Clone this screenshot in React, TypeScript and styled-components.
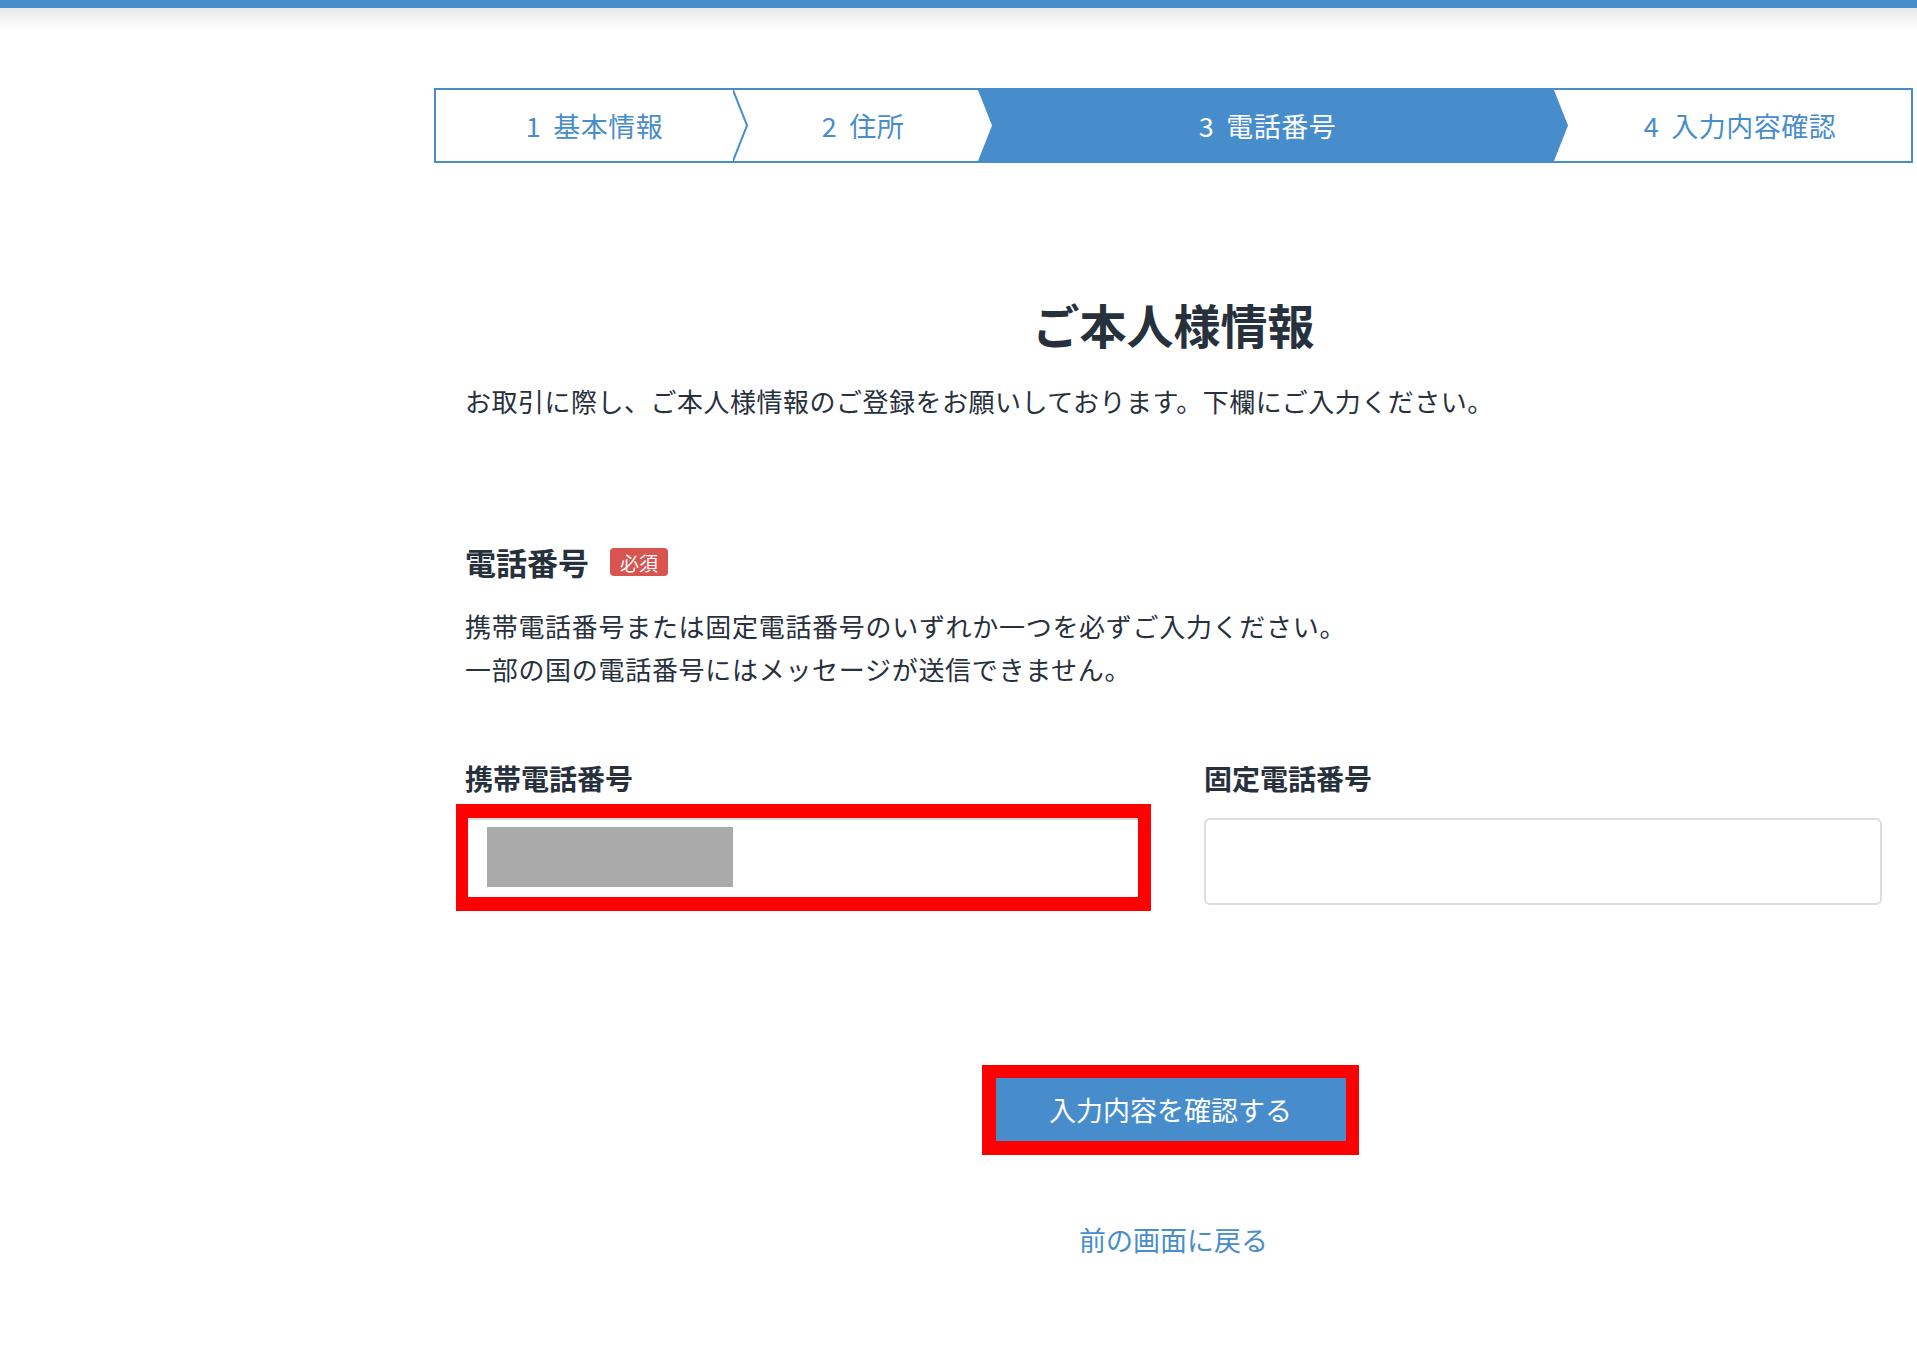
import React from "react";
import styled, { createGlobalStyle } from "styled-components";

const BLUE = "#478dcb";
const INK = "#27303d";

const GlobalStyle = createGlobalStyle`
  body {
    margin: 0;
    background: #ffffff;
    font-family: "Noto Sans CJK JP", "Noto Sans", sans-serif;
    color: ${INK};
  }
`;

const TopBar = styled.header`
  height: 22px;
  border-top: 8px solid ${BLUE};
  background: linear-gradient(#e8e8e8, #ffffff);
`;

const Main = styled.main`
  width: 1479px;
  margin: 58px 0 0 434px;
  padding-bottom: 100px;
`;

const StepBar = styled.ol`
  display: flex;
  height: 71px;
  margin: 0;
  padding: 0;
  list-style: none;
  border: 2px solid ${BLUE};
`;

const Step = styled.li<{ $active?: boolean; $width?: number; $shift?: number }>`
  display: flex;
  align-items: center;
  justify-content: center;
  flex: ${(p) => (p.$width ? `0 0 ${p.$width}px` : "1 1 auto")};
  padding-left: ${(p) => (p.$shift && p.$shift > 0 ? p.$shift : 0)}px;
  padding-right: ${(p) => (p.$shift && p.$shift < 0 ? -p.$shift : 0)}px;
  box-sizing: border-box;
  background: ${(p) => (p.$active ? BLUE : "#ffffff")};
  color: ${(p) => (p.$active ? "#ffffff" : BLUE)};
  font-size: 27px;
  letter-spacing: 0.5px;
`;

const StepNo = styled.span`
  margin-right: 12px;
`;

const Divider = styled.svg`
  display: block;
  flex: 0 0 15px;
  width: 15px;
  height: 71px;
`;

type Join = "line" | "into-active" | "out-of-active";

function Chevron({ kind }: { kind: Join }) {
  if (kind === "line") {
    return (
      <Divider viewBox="0 0 15 71" preserveAspectRatio="none">
        <rect width="15" height="71" fill="#fff" />
        <polyline points="0,0 14,35.5 0,71" fill="none" stroke={BLUE} strokeWidth="2" />
      </Divider>
    );
  }
  const back = kind === "into-active" ? BLUE : "#fff";
  const front = kind === "into-active" ? "#fff" : BLUE;
  return (
    <Divider viewBox="0 0 15 71" preserveAspectRatio="none">
      <rect width="15" height="71" fill={back} />
      <polygon points="0,0 14,35.5 0,71" fill={front} />
    </Divider>
  );
}

const Content = styled.section`
  margin: 0 31px;
  display: flex;
  flex-direction: column;
`;

const Title = styled.h1`
  margin: 128px 0 0;
  text-align: center;
  font-size: 47px;
  line-height: 66px;
  font-weight: 700;
  color: ${INK};
`;

const Lead = styled.p`
  margin: 22px 0 0;
  font-size: 26px;
  line-height: 44px;
  letter-spacing: 0.5px;
`;

const SectionHead = styled.div`
  display: flex;
  align-items: center;
  gap: 21px;
  margin-top: 117px;
`;

const SectionTitle = styled.h2`
  margin: 0;
  font-size: 31px;
  line-height: 44px;
  font-weight: 700;
`;

const Badge = styled.span`
  display: inline-flex;
  align-items: center;
  justify-content: center;
  width: 58px;
  height: 28px;
  border-radius: 4px;
  background: #d9534f;
  color: #ffffff;
  font-size: 19px;
  line-height: 1;
`;

const Note = styled.p`
  margin: 20px 0 0;
  font-size: 26px;
  line-height: 43px;
  letter-spacing: 0.7px;
`;

const FieldRow = styled.div`
  display: grid;
  grid-template-columns: 1fr 1fr;
  gap: 61px;
  margin-top: 68px;
`;

const Field = styled.div`
  display: flex;
  flex-direction: column;
  gap: 20px;
`;

const FieldLabel = styled.label`
  font-size: 28px;
  line-height: 40px;
  font-weight: 700;
`;

const InputWrap = styled.div`
  position: relative;
`;

const TextInput = styled.input`
  display: block;
  width: 100%;
  height: 87px;
  box-sizing: border-box;
  border: 2px solid #dddddd;
  border-radius: 6px;
  background: #ffffff;
  font-size: 26px;
  padding: 0 20px;
  font-family: inherit;
`;

const Redacted = styled.div`
  position: absolute;
  left: 22px;
  top: 9px;
  width: 246px;
  height: 60px;
  background: #aaaaaa;
`;

const Highlight = styled.div<{ $t: number; $r: number; $b: number; $l: number; $w: string }>`
  position: absolute;
  top: -${(p) => p.$t}px;
  right: -${(p) => p.$r}px;
  bottom: -${(p) => p.$b}px;
  left: -${(p) => p.$l}px;
  border: solid #ff0000;
  border-width: ${(p) => p.$w};
  pointer-events: none;
`;

const Actions = styled.div`
  display: flex;
  flex-direction: column;
  align-items: center;
  margin-top: 173px;
`;

const ButtonWrap = styled.div`
  position: relative;
  margin-right: 6px;
`;

const SubmitButton = styled.button`
  display: block;
  width: 350px;
  height: 63px;
  border: none;
  background: ${BLUE};
  color: #ffffff;
  font-family: inherit;
  font-size: 27px;
  cursor: pointer;
`;

const BackLink = styled.a`
  margin-top: 79px;
  color: ${BLUE};
  font-size: 27px;
  line-height: 40px;
  text-decoration: none;
  cursor: pointer;
`;

export default function App() {
  return (
    <>
      <GlobalStyle />
      <TopBar />
      <Main>
        <StepBar>
          <Step $width={297} $shift={20}>
            <StepNo>1</StepNo>基本情報
          </Step>
          <Chevron kind="line" />
          <Step $width={230}>
            <StepNo>2</StepNo>住所
          </Step>
          <Chevron kind="into-active" />
          <Step $width={561} $shift={-12} $active>
            <StepNo>3</StepNo>電話番号
          </Step>
          <Chevron kind="out-of-active" />
          <Step>
            <StepNo>4</StepNo>入力内容確認
          </Step>
        </StepBar>

        <Content>
          <Title>ご本人様情報</Title>
          <Lead>お取引に際し、ご本人様情報のご登録をお願いしております。下欄にご入力ください。</Lead>

          <SectionHead>
            <SectionTitle>電話番号</SectionTitle>
            <Badge>必須</Badge>
          </SectionHead>
          <Note>
            携帯電話番号または固定電話番号のいずれか一つを必ずご入力ください。
            <br />
            一部の国の電話番号にはメッセージが送信できません。
          </Note>

          <FieldRow>
            <Field>
              <FieldLabel htmlFor="mobile">携帯電話番号</FieldLabel>
              <InputWrap>
                <TextInput id="mobile" type="tel" />
                <Redacted />
                <Highlight $t={14} $r={8} $b={6} $l={9} $w="14px 13px 14px 12px" />
              </InputWrap>
            </Field>
            <Field>
              <FieldLabel htmlFor="landline">固定電話番号</FieldLabel>
              <InputWrap>
                <TextInput id="landline" type="tel" />
              </InputWrap>
            </Field>
          </FieldRow>

          <Actions>
            <ButtonWrap>
              <SubmitButton type="submit">入力内容を確認する</SubmitButton>
              <Highlight $t={13} $r={13} $b={14} $l={14} $w="13px 13px 14px 14px" />
            </ButtonWrap>
            <BackLink>前の画面に戻る</BackLink>
          </Actions>
        </Content>
      </Main>
    </>
  );
}
